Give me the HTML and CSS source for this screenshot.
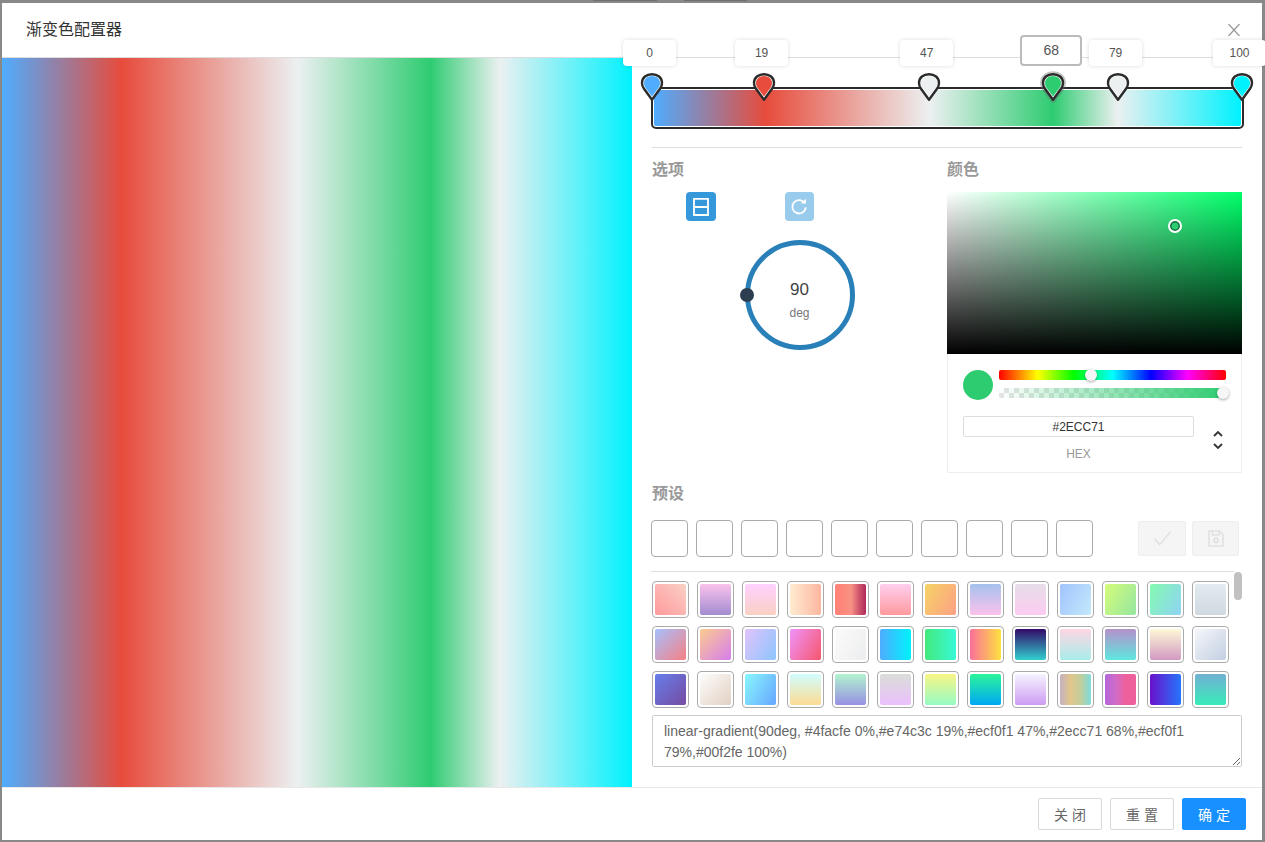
FILE: index.html
```html
<html>
<head>
    <meta charset="utf-8">
    <title>渐变色配置器</title>
    <link rel="stylesheet" href="styles.css">
</head>
<body>
    <svg class="defs" width="0" height="0">
        <symbol id="drop" viewBox="0 0 24 28">
            <path d="M12 26.8 L4 15.8 C2.6 13.8 2 12 2 10 C2 4.5 6.5 1.2 12 1.2 C17.5 1.2 22 4.5 22 10 C22 12 21.4 13.8 20 15.8 Z" fill="#fff" stroke="#2b2b2b" stroke-width="2.4" stroke-linejoin="round"/>
            <path d="M12 23.6 L5.6 14.9 C4.5 13.3 4 11.8 4 10 C4 5.8 7.5 3 12 3 C16.5 3 20 5.8 20 10 C20 11.8 19.5 13.3 18.4 14.9 Z" fill="currentColor"/>
        </symbol>
    </svg>

    <div class="behind left"></div>
    <div class="behind right"></div>

    <div class="modal">
        <div class="modal-header">
            <span class="modal-title">渐变色配置器</span>
            <svg class="close" width="12" height="12" viewBox="0 0 12 12"><path d="M.5 0 L11.5 12 M11.5 0 L.5 12" stroke="#999" stroke-width="1.3" fill="none"/></svg>
        </div>

        <div class="modal-body">
            <div class="preview"></div>

            <div class="side">
                <div class="stops">
                    <div class="stop-label" style="left:0%">0</div>
                    <div class="stop-label" style="left:19%">19</div>
                    <div class="stop-label" style="left:47%">47</div>
                    <div class="stop-label active" style="left:68%">68</div>
                    <div class="stop-label" style="left:79%">79</div>
                    <div class="stop-label" style="left:100%">100</div>

                    <div class="track"><div class="track-fill"></div></div>

                    <svg class="thumb c-blue" style="left:0%"><use href="#drop"/></svg>
                    <svg class="thumb c-red" style="left:19%"><use href="#drop"/></svg>
                    <svg class="thumb c-white" style="left:47%"><use href="#drop"/></svg>
                    <svg class="thumb" style="left:68%" viewBox="0 0 24 28"><path class="halo" d="M12 26.8 L4 15.8 C2.6 13.8 2 12 2 10 C2 4.5 6.5 1.2 12 1.2 C17.5 1.2 22 4.5 22 10 C22 12 21.4 13.8 20 15.8 Z"/></svg>
                    <svg class="thumb c-green" style="left:68%"><use href="#drop"/></svg>
                    <svg class="thumb c-white" style="left:79%"><use href="#drop"/></svg>
                    <svg class="thumb c-cyan" style="left:100%"><use href="#drop"/></svg>
                </div>

                <div class="columns">
                    <div class="options">
                        <h4>选项</h4>
                        <div class="tool-row">
                            <div class="tool-btn">
                                <svg width="18" height="18" viewBox="0 0 18 18"><path d="M2 .8 H16 V17 H2 Z M2 9 H16" stroke="#fff" stroke-width="1.8" fill="none"/></svg>
                            </div>
                            <div class="tool-btn faded">
                                <svg width="18" height="18" viewBox="0 0 18 18"><path d="M14.6 5 A6.7 6.7 0 1 0 15.7 9.4" stroke="#fff" stroke-width="1.8" fill="none"/><path d="M11 5.6 H16 V.8 Z" fill="#fff"/></svg>
                            </div>
                        </div>
                        <div class="dial">
                            <div class="dial-value">90</div>
                            <div class="dial-unit">deg</div>
                            <div class="dial-knob"></div>
                        </div>
                    </div>

                    <div class="color">
                        <h4>颜色</h4>
                        <div class="color-card">
                            <div class="saturation"><div class="sat-cursor"></div></div>
                            <div class="color-controls">
                                <div class="slider-row">
                                    <div class="color-dot"></div>
                                    <div class="sliders">
                                        <div class="slider hue"><div class="slider-thumb" style="left:40.5%"></div></div>
                                        <div class="slider alpha"><div class="slider-thumb" style="left:98.7%"></div></div>
                                    </div>
                                </div>
                                <div class="hex-row">
                                    <div class="hex-field">
                                        <input class="hex-input" type="text" value="#2ECC71">
                                        <div class="hex-label">HEX</div>
                                    </div>
                                    <svg class="hex-toggle" width="12" height="20" viewBox="0 0 12 20"><path d="M2 6 L6 2 L10 6 M2 14 L6 18 L10 14" stroke="#333" stroke-width="1.8" fill="none"/></svg>
                                </div>
                            </div>
                        </div>
                    </div>
                </div>

                <h4 class="preset-title">预设</h4>
                <div class="custom-row">
                    <div class="empty-slot"></div>
                    <div class="empty-slot"></div>
                    <div class="empty-slot"></div>
                    <div class="empty-slot"></div>
                    <div class="empty-slot"></div>
                    <div class="empty-slot"></div>
                    <div class="empty-slot"></div>
                    <div class="empty-slot"></div>
                    <div class="empty-slot"></div>
                    <div class="empty-slot"></div>
                    <div class="custom-btn first">
                        <svg width="19" height="15" viewBox="0 0 20 16"><path d="M1.5 8 L7 14.5 L18.5 1" stroke="#ddd" stroke-width="1.4" fill="none"/></svg>
                    </div>
                    <div class="custom-btn">
                        <svg width="16" height="17" viewBox="0 0 16 17"><path d="M1 1 H11.5 L15 4.5 V16 H1 Z M4.5 1 V5 H11 V1" stroke="#e0e0e0" stroke-width="1.5" fill="none"/><circle cx="8" cy="10.5" r="2.2" stroke="#e0e0e0" stroke-width="1.5" fill="none"/></svg>
                    </div>
                </div>

                <div class="preset-list">
                    <div class="preset"><i class="p1"></i></div>
                    <div class="preset"><i class="p2"></i></div>
                    <div class="preset"><i class="p3"></i></div>
                    <div class="preset"><i class="p4"></i></div>
                    <div class="preset"><i class="p5"></i></div>
                    <div class="preset"><i class="p6"></i></div>
                    <div class="preset"><i class="p7"></i></div>
                    <div class="preset"><i class="p8"></i></div>
                    <div class="preset"><i class="p9"></i></div>
                    <div class="preset"><i class="p10"></i></div>
                    <div class="preset"><i class="p11"></i></div>
                    <div class="preset"><i class="p12"></i></div>
                    <div class="preset"><i class="p13"></i></div>
                    <div class="preset"><i class="p14"></i></div>
                    <div class="preset"><i class="p15"></i></div>
                    <div class="preset"><i class="p16"></i></div>
                    <div class="preset"><i class="p17"></i></div>
                    <div class="preset"><i class="p18"></i></div>
                    <div class="preset"><i class="p19"></i></div>
                    <div class="preset"><i class="p20"></i></div>
                    <div class="preset"><i class="p21"></i></div>
                    <div class="preset"><i class="p22"></i></div>
                    <div class="preset"><i class="p23"></i></div>
                    <div class="preset"><i class="p24"></i></div>
                    <div class="preset"><i class="p25"></i></div>
                    <div class="preset"><i class="p26"></i></div>
                    <div class="preset"><i class="p27"></i></div>
                    <div class="preset"><i class="p28"></i></div>
                    <div class="preset"><i class="p29"></i></div>
                    <div class="preset"><i class="p30"></i></div>
                    <div class="preset"><i class="p31"></i></div>
                    <div class="preset"><i class="p32"></i></div>
                    <div class="preset"><i class="p33"></i></div>
                    <div class="preset"><i class="p34"></i></div>
                    <div class="preset"><i class="p35"></i></div>
                    <div class="preset"><i class="p36"></i></div>
                    <div class="preset"><i class="p37"></i></div>
                    <div class="preset"><i class="p38"></i></div>
                    <div class="preset"><i class="p39"></i></div>
                    <div class="scroll-thumb"></div>
                </div>

                <textarea class="css-output">linear-gradient(90deg, #4facfe 0%,#e74c3c 19%,#ecf0f1 47%,#2ecc71 68%,#ecf0f1 79%,#00f2fe 100%)</textarea>
            </div>
        </div>

        <div class="modal-footer">
            <button class="btn">关 闭</button>
            <button class="btn">重 置</button>
            <button class="btn primary">确 定</button>
        </div>
    </div>
</body>
</html>
```

FILE: styles.css
```css
body {
    margin: 0;
    height: 842px;
    overflow: hidden;
    background: #888;
    font-family: "Liberation Sans", "Noto Sans CJK SC", sans-serif;
    color: #333;
}

.defs {
    display: block;
    height: 0;
}

/* bottoms of the buttons on the page under the overlay */
.behind {
    position: absolute;
    top: 0;
    height: 1px;
    background: #6e6e6e;
}

.behind.left {
    left: 593px;
    width: 64px;
}

.behind.right {
    left: 684px;
    width: 63px;
}

h4 {
    margin: 0;
    font-size: 16px;
    line-height: 22px;
    font-weight: bold;
    color: #999;
}

/* modal shell */
.modal {
    margin: 3px 0 0 2px;
    width: 1260px;
    height: 837px;
    background: white;
    display: flex;
    flex-direction: column;
}

.modal-header {
    height: 54px;
    flex: none;
    display: flex;
    align-items: center;
    justify-content: space-between;
    padding: 0 22px 0 24px;
    border-bottom: 1px solid #ddd;
}

.modal-title {
    font-size: 16px;
    color: #333;
    margin-top: -5px;
}

.close {
    margin-top: -1px;
}

.modal-body {
    flex: 1;
    display: flex;
    min-height: 0;
}

.preview {
    width: 630px;
    flex: none;
    background: linear-gradient(90deg, #4facfe 0%, #e74c3c 19%, #ecf0f1 47%, #2ecc71 68%, #ecf0f1 79%, #00f2fe 100%);
}

.side {
    flex: 1;
    padding: 0 20px;
    min-width: 0;
}

/* gradient stops */
.stops {
    position: relative;
    height: 90px;
    padding-top: 29px;
    box-sizing: border-box;
    border-bottom: 1px solid #ddd;
}

.stop-label {
    position: absolute;
    top: -18px;
    width: 53px;
    height: 26px;
    margin-left: -29px;
    background: white;
    border-radius: 4px;
    box-shadow: 0 0 4px rgba(0, 0, 0, 0.14);
    font-size: 12px;
    line-height: 26px;
    text-align: center;
    color: #555;
    z-index: 2;
}

.stop-label.active {
    top: -23px;
    width: 62px;
    height: 31px;
    margin-left: -33px;
    box-sizing: border-box;
    border: 2px solid #bbb;
    box-shadow: none;
    font-size: 14px;
    line-height: 27px;
}

.track {
    height: 42px;
    margin: 0 -2px 0 -1px;
    box-sizing: border-box;
    padding: 1px;
    border: 2px solid #2b2b2b;
    border-radius: 5px;
    background: white;
}

.track-fill {
    height: 100%;
    border-radius: 2px;
    background: linear-gradient(90deg, #4facfe 0%, #e74c3c 19%, #ecf0f1 47%, #2ecc71 68%, #ecf0f1 79%, #00f2fe 100%);
}

.thumb {
    position: absolute;
    top: 15px;
    width: 24px;
    height: 28px;
    margin-left: -12px;
    overflow: visible;
    z-index: 1;
}

.halo {
    fill: none;
    stroke: rgba(110, 110, 110, 0.4);
    stroke-width: 6;
    stroke-linejoin: round;
}

.c-blue { color: #4facfe; }
.c-red { color: #e74c3c; }
.c-white { color: #ecf0f1; }
.c-green { color: #2ecc71; }
.c-cyan { color: #00f2fe; }

/* options and colour picker */
.columns {
    display: grid;
    grid-template-columns: 295px 295px;
    padding-top: 11px;
}

.options h4,
.color h4 {
    margin-bottom: 11px;
}

.tool-row {
    display: grid;
    grid-template-columns: repeat(3, 1fr);
    justify-items: center;
}

.tool-btn {
    width: 30px;
    height: 29px;
    border-radius: 4px;
    background: #3498db;
    display: flex;
    align-items: center;
    justify-content: center;
}

.tool-btn.faded {
    width: 29px;
    opacity: 0.5;
}

.dial {
    position: relative;
    width: 110px;
    height: 110px;
    margin: 19px auto 0;
    box-sizing: border-box;
    border: 5px solid #2980b9;
    border-radius: 50%;
    text-align: center;
}

.dial-value {
    font-size: 17px;
    line-height: 20px;
    margin-top: 35px;
    color: #444;
}

.dial-unit {
    font-size: 12px;
    line-height: 14px;
    margin-top: 6px;
    color: #777;
}

.dial-knob {
    position: absolute;
    left: -10px;
    top: 43px;
    width: 14px;
    height: 14px;
    border-radius: 50%;
    background: #2c3e50;
}

.color-card {
    height: 281px;
    box-sizing: border-box;
    border: 1px solid #eee;
    border-top: none;
    border-radius: 2px;
}

.saturation {
    position: relative;
    height: 162px;
    margin: 0 -1px;
    background: linear-gradient(to top, #000, transparent), linear-gradient(to right, #fff, transparent), #00ff6a;
}

.sat-cursor {
    position: absolute;
    left: 77.2%;
    top: 20.8%;
    width: 14px;
    height: 14px;
    box-sizing: border-box;
    margin: -7px 0 0 -7px;
    border: 2px solid #fff;
    border-radius: 50%;
    background: #2ecc71;
    box-shadow: inset 0 0 0 1.5px #14683a;
}

.color-controls {
    padding: 16px 15px 0;
}

.slider-row {
    display: flex;
    gap: 6px;
}

.color-dot {
    width: 30px;
    height: 30px;
    border-radius: 50%;
    background: #2ecc71;
}

.sliders {
    width: 227px;
}

.slider {
    position: relative;
    height: 10px;
    border-radius: 2px;
}

.hue {
    background: linear-gradient(to right, #f00 0%, #ff0 17%, #0f0 33%, #0ff 50%, #00f 67%, #f0f 83%, #f00 100%);
    margin-bottom: 8px;
}

.alpha {
    background: linear-gradient(to right, rgba(46, 204, 113, 0), #2ecc71), repeating-conic-gradient(#e4e4e4 0 25%, #fff 0 50%) 0 0 / 10px 10px;
}

.slider-thumb {
    position: absolute;
    top: -1px;
    width: 12px;
    height: 12px;
    margin-left: -6px;
    border-radius: 50%;
    background: #f6f6f6;
    box-shadow: 0 1px 3px rgba(0, 0, 0, 0.35);
}

.hex-row {
    display: flex;
    margin-top: 16px;
}

.hex-field {
    width: 231px;
    text-align: center;
}

.hex-input {
    display: block;
    width: 100%;
    height: 21px;
    box-sizing: border-box;
    padding: 0;
    border: 1px solid #ddd;
    border-radius: 2px;
    outline: none;
    font-family: inherit;
    font-size: 12px;
    text-align: center;
    color: #333;
}

.hex-label {
    font-size: 12px;
    line-height: 14px;
    margin-top: 10px;
    color: #999;
}

.hex-toggle {
    margin: 14px 0 0 18px;
}

/* presets */
.preset-title {
    margin-top: 10px;
}

.custom-row {
    display: flex;
    gap: 8px;
    align-items: center;
    margin: 15px 0 14px -1px;
}

.empty-slot {
    width: 37px;
    height: 37px;
    box-sizing: border-box;
    border: 1px solid #aaa;
    border-radius: 4px;
}

.custom-btn {
    width: 47px;
    height: 35px;
    box-sizing: border-box;
    border: 1px solid #eee;
    border-radius: 2px;
    background: #f5f5f5;
    display: flex;
    align-items: center;
    justify-content: center;
    margin-left: -2px;
}

.custom-btn.first {
    width: 48px;
    margin-left: 37px;
}

.preset-list {
    position: relative;
    height: 144px;
    box-sizing: border-box;
    margin: 0 8px 0 -1px;
    padding: 9px 0 0 1px;
    border-top: 1px solid #ddd;
    display: flex;
    flex-wrap: wrap;
    align-content: flex-start;
    gap: 8px;
}

.preset {
    width: 37px;
    height: 37px;
    box-sizing: border-box;
    padding: 2px;
    border: 1px solid #aaa;
    border-radius: 4px;
}

.preset i {
    display: block;
    height: 100%;
    border-radius: 2px;
}

.scroll-thumb {
    position: absolute;
    right: -8px;
    top: 0;
    width: 8px;
    height: 28px;
    border-radius: 4px;
    background: #c1c1c1;
}

.p1 { background: linear-gradient(45deg, #ff9a9e, #fad0c4); }
.p2 { background: linear-gradient(to top, #a18cd1, #fbc2eb); }
.p3 { background: linear-gradient(to top, #fad0c4, #ffd1ff); }
.p4 { background: linear-gradient(to right, #ffecd2, #fcb69f); }
.p5 { background: linear-gradient(to right, #ff8177 0%, #ff867a 21%, #f99185 52%, #cf556c 78%, #b12a5b 100%); }
.p6 { background: linear-gradient(to top, #ff9a9e, #fecfef); }
.p7 { background: linear-gradient(120deg, #f6d365, #fda085); }
.p8 { background: linear-gradient(to top, #fbc2eb, #a6c1ee); }
.p9 { background: linear-gradient(to top, #fdcbf1, #e6dee9); }
.p10 { background: linear-gradient(120deg, #a1c4fd, #c2e9fb); }
.p11 { background: linear-gradient(120deg, #d4fc79, #96e6a1); }
.p12 { background: linear-gradient(120deg, #84fab0, #8fd3f4); }
.p13 { background: linear-gradient(to top, #cfd9df, #e2ebf0); }
.p14 { background: linear-gradient(135deg, #a6c0fe, #f68084); }
.p15 { background: linear-gradient(135deg, #fccb90, #d57eeb); }
.p16 { background: linear-gradient(120deg, #e0c3fc, #8ec5fc); }
.p17 { background: linear-gradient(120deg, #f093fb, #f5576c); }
.p18 { background: linear-gradient(120deg, #fdfbfb, #ebedee); }
.p19 { background: linear-gradient(to right, #4facfe, #00f2fe); }
.p20 { background: linear-gradient(to right, #43e97b, #38f9d7); }
.p21 { background: linear-gradient(to right, #fa709a, #fee140); }
.p22 { background: linear-gradient(to top, #30cfd0, #330867); }
.p23 { background: linear-gradient(to top, #a8edea, #fed6e3); }
.p24 { background: linear-gradient(to top, #5ee7df, #b490ca); }
.p25 { background: linear-gradient(to top, #d299c2, #fef9d7); }
.p26 { background: linear-gradient(135deg, #f5f7fa, #c3cfe2); }
.p27 { background: linear-gradient(135deg, #667eea, #764ba2); }
.p28 { background: linear-gradient(135deg, #fdfcfb, #e2d1c3); }
.p29 { background: linear-gradient(120deg, #89f7fe, #66a6ff); }
.p30 { background: linear-gradient(to top, #fddb92, #d1fdff); }
.p31 { background: linear-gradient(to top, #9890e3, #b1f4cf); }
.p32 { background: linear-gradient(to top, #ebc0fd, #d9ded8); }
.p33 { background: linear-gradient(to top, #96fbc4, #f9f586); }
.p34 { background: linear-gradient(to top, #00a8f5, #2af598); }
.p35 { background: linear-gradient(to top, #cd9cf2, #f6f3ff); }
.p36 { background: linear-gradient(to right, #c4b2c0, #e2c58b, #c2ce9c, #7edbdc); }
.p37 { background: linear-gradient(to right, #b465da, #cf6cc9, #ee609c, #ee609c); }
.p38 { background: linear-gradient(to right, #6a11cb, #2575fc); }
.p39 { background: linear-gradient(to top, #37ecba, #72afd3); }

.css-output {
    display: block;
    width: 590px;
    height: 52px;
    box-sizing: border-box;
    margin: 0;
    padding: 5px 11px;
    border: 1px solid #ccc;
    border-radius: 2px;
    outline: none;
    font-family: inherit;
    font-size: 14px;
    line-height: 21px;
    color: #666;
}

/* footer */
.modal-footer {
    height: 53px;
    flex: none;
    box-sizing: border-box;
    border-top: 1px solid #e8e8e8;
    display: flex;
    justify-content: flex-end;
    gap: 8px;
    padding: 10px 16px 0 0;
}

.btn {
    width: 64px;
    height: 32px;
    box-sizing: border-box;
    border: 1px solid #d9d9d9;
    border-radius: 2px;
    background: white;
    font-family: inherit;
    font-size: 14px;
    color: #666;
    padding: 0;
}

.btn.primary {
    background: #1890ff;
    border-color: #1890ff;
    color: white;
}
```
